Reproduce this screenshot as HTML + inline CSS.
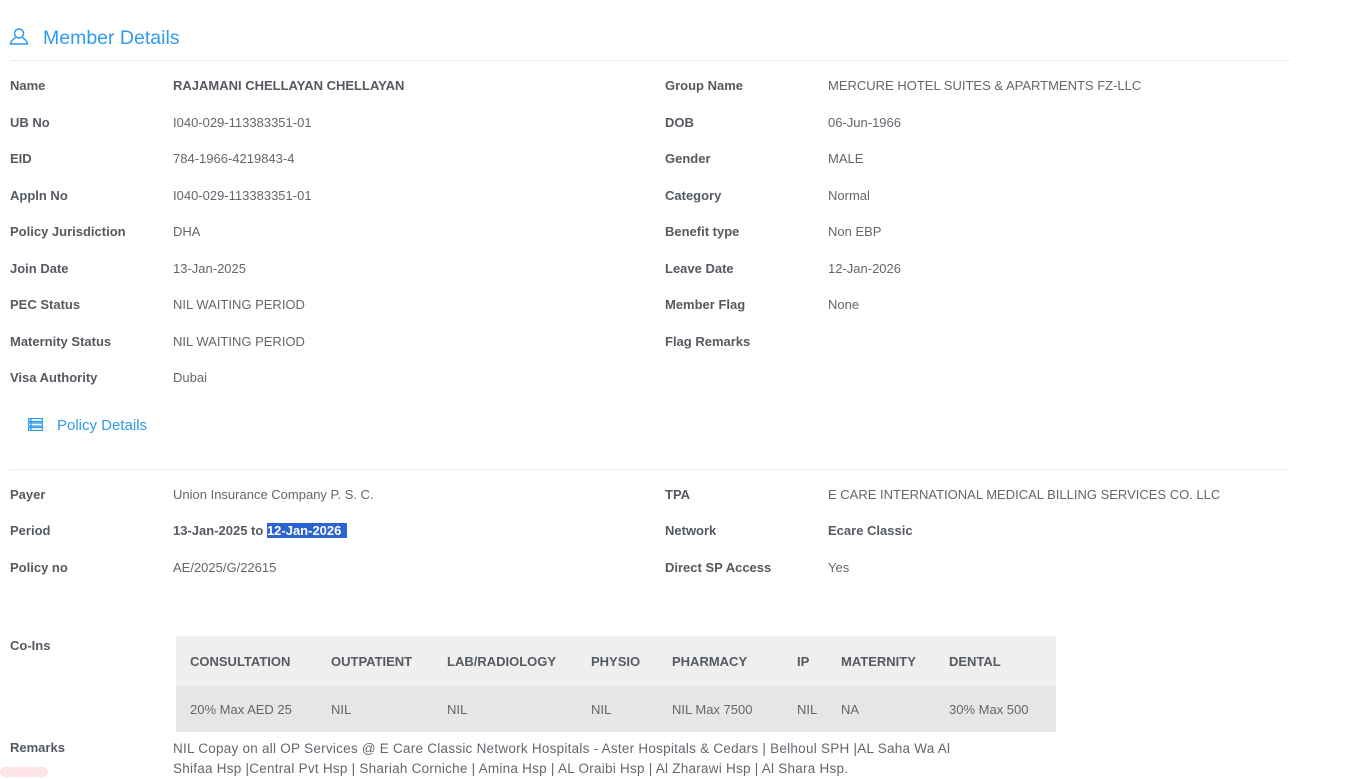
<!DOCTYPE html>
<html><head><meta charset="utf-8"><style>
body{margin:0;width:1356px;height:772px;overflow:hidden;background:#fff;font-family:"Liberation Sans",sans-serif;position:relative}
.a{position:absolute;white-space:nowrap;font-size:13px;line-height:16px}
.l{color:#555a60;font-weight:bold}
.v{color:#62676d}
.b{font-weight:bold;color:#555a60}
.h{position:absolute;color:#2f9bea;white-space:nowrap}
.hr{position:absolute;left:10px;width:1280px;height:1px;background:#ececec}
table{position:absolute;left:176px;top:636px;width:880px;border-collapse:collapse;font-size:13px}
th{background:#efefef;height:50px;text-align:left;padding:0 0 0 14px;color:#555a60;font-weight:bold}
td{background:#e6e6e6;height:46px;padding:0 0 0 14px;color:#62676d}
</style></head><body>
<svg style="position:absolute;left:9px;top:27px" width="20" height="20" viewBox="0 0 20 20" fill="none" stroke="#2f9bea" stroke-width="1.5"><circle cx="10" cy="6.5" r="4.5"/><path d="M6.5 10.5 C5 12 2 13 1.5 17 H18.5 C18 13 15 12 13.5 10.5"/></svg>
<div class="h" style="left:43px;top:27px;font-size:19.5px">Member Details</div>
<div class="hr" style="top:60px"></div>

<div class="a l" style="left:10px;top:78px">Name</div><div class="a b" style="left:173px;top:78px">RAJAMANI CHELLAYAN CHELLAYAN</div>
<div class="a l" style="left:10px;top:115px">UB No</div><div class="a v" style="left:173px;top:115px">I040-029-113383351-01</div>
<div class="a l" style="left:10px;top:151px">EID</div><div class="a v" style="left:173px;top:151px">784-1966-4219843-4</div>
<div class="a l" style="left:10px;top:188px">Appln No</div><div class="a v" style="left:173px;top:188px">I040-029-113383351-01</div>
<div class="a l" style="left:10px;top:224px">Policy Jurisdiction</div><div class="a v" style="left:173px;top:224px">DHA</div>
<div class="a l" style="left:10px;top:261px">Join Date</div><div class="a v" style="left:173px;top:261px">13-Jan-2025</div>
<div class="a l" style="left:10px;top:297px">PEC Status</div><div class="a v" style="left:173px;top:297px">NIL WAITING PERIOD</div>
<div class="a l" style="left:10px;top:334px">Maternity Status</div><div class="a v" style="left:173px;top:334px">NIL WAITING PERIOD</div>
<div class="a l" style="left:10px;top:370px">Visa Authority</div><div class="a v" style="left:173px;top:370px">Dubai</div>

<div class="a l" style="left:665px;top:78px">Group Name</div><div class="a v" style="left:828px;top:78px">MERCURE HOTEL SUITES &amp; APARTMENTS FZ-LLC</div>
<div class="a l" style="left:665px;top:115px">DOB</div><div class="a v" style="left:828px;top:115px">06-Jun-1966</div>
<div class="a l" style="left:665px;top:151px">Gender</div><div class="a v" style="left:828px;top:151px">MALE</div>
<div class="a l" style="left:665px;top:188px">Category</div><div class="a v" style="left:828px;top:188px">Normal</div>
<div class="a l" style="left:665px;top:224px">Benefit type</div><div class="a v" style="left:828px;top:224px">Non EBP</div>
<div class="a l" style="left:665px;top:261px">Leave Date</div><div class="a v" style="left:828px;top:261px">12-Jan-2026</div>
<div class="a l" style="left:665px;top:297px">Member Flag</div><div class="a v" style="left:828px;top:297px">None</div>
<div class="a l" style="left:665px;top:334px">Flag Remarks</div>

<svg style="position:absolute;left:28px;top:418px" width="15" height="13" viewBox="0 0 15 13" fill="none" stroke="#2f9bea" stroke-width="1.3"><rect x="0.5" y="0.5" width="14" height="3"/><rect x="0.5" y="5" width="14" height="3"/><rect x="0.5" y="9.5" width="14" height="3"/><path d="M3 0.5V12.5"/></svg>
<div class="h" style="left:57px;top:417px;font-size:15px">Policy Details</div>
<div class="hr" style="top:469px"></div>

<div class="a l" style="left:10px;top:487px">Payer</div><div class="a v" style="left:173px;top:487px">Union Insurance Company P. S. C.</div>
<div class="a l" style="left:10px;top:523px">Period</div><div class="a b" style="left:173px;top:523px">13-Jan-2025 to <span style="background:#2b64d0;color:#fff;padding-right:6px">12-Jan-2026</span></div>
<div class="a l" style="left:10px;top:560px">Policy no</div><div class="a v" style="left:173px;top:560px">AE/2025/G/22615</div>
<div class="a l" style="left:665px;top:487px">TPA</div><div class="a v" style="left:828px;top:487px">E CARE INTERNATIONAL MEDICAL BILLING SERVICES CO. LLC</div>
<div class="a l" style="left:665px;top:523px">Network</div><div class="a b" style="left:828px;top:523px">Ecare Classic</div>
<div class="a l" style="left:665px;top:560px">Direct SP Access</div><div class="a v" style="left:828px;top:560px">Yes</div>

<div class="a l" style="left:10px;top:638px">Co-Ins</div>
<table><tr><th style="width:127px">CONSULTATION</th><th style="width:102px">OUTPATIENT</th><th style="width:130px">LAB/RADIOLOGY</th><th style="width:67px">PHYSIO</th><th style="width:111px">PHARMACY</th><th style="width:30px">IP</th><th style="width:94px">MATERNITY</th><th>DENTAL</th></tr>
<tr><td>20% Max AED 25</td><td>NIL</td><td>NIL</td><td>NIL</td><td>NIL Max 7500</td><td>NIL</td><td>NA</td><td>30% Max 500</td></tr></table>

<div class="a l" style="left:10px;top:740px">Remarks</div>
<div class="a v" style="left:173px;top:739px;line-height:20px;font-size:13.5px;letter-spacing:0.25px">NIL Copay on all OP Services @ E Care Classic Network Hospitals - Aster Hospitals &amp; Cedars | Belhoul SPH |AL Saha Wa Al<br>Shifaa Hsp |Central Pvt Hsp | Shariah Corniche | Amina Hsp | AL Oraibi Hsp | Al Zharawi Hsp | Al Shara Hsp.</div>
<div style="position:absolute;left:0;top:767px;width:48px;height:10px;border-radius:5px;background:#fde4e8"></div>
</body></html>
